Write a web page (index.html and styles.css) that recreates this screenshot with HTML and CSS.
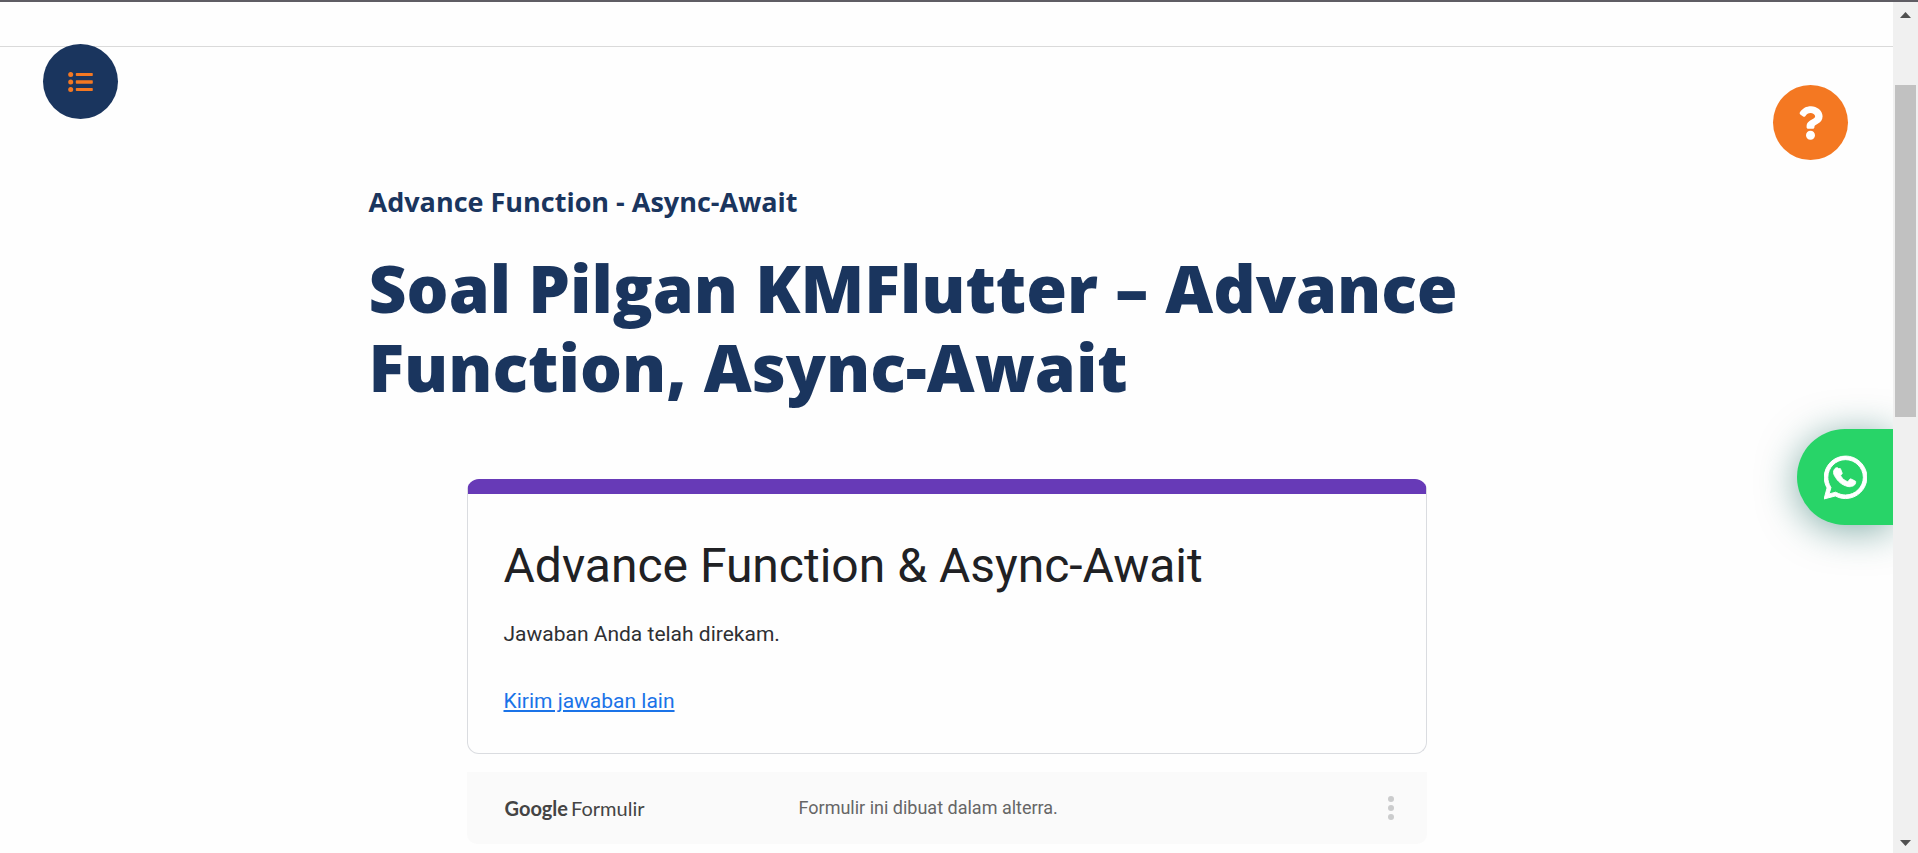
FILE: index.html
```html
<!DOCTYPE html>
<html lang="id">
<head>
<meta charset="utf-8">
<title>Soal Pilgan KMFlutter – Advance Function, Async-Await</title>
<link rel="stylesheet" href="styles.css">
</head>
<body>
<div class="viewport">
  <div class="page">
    <header class="topbar"></header>
    <main class="lesson">
      <p class="section-name">Advance Function - Async-Await</p>
      <h1 class="lesson-title">Soal Pilgan KMFlutter – Advance Function, Async-Await</h1>
      <div class="form">
        <section class="card">
          <h2 class="card-title">Advance Function &amp; Async-Await</h2>
          <p class="card-text">Jawaban Anda telah direkam.</p>
          <a class="card-link" href="#again">Kirim jawaban lain</a>
        </section>
        <footer class="form-footer">
          <a class="logo" href="#forms"><b class="logo-brand">Google</b><span class="logo-product">Formulir</span></a>
          <span class="footer-note">Formulir ini dibuat dalam alterra.</span>
          <button class="more" type="button" aria-label="Opsi lainnya">
            <svg width="6" height="24" viewBox="0 0 6 24" fill="#cbcccd"><circle cx="3" cy="3" r="3"/><circle cx="3" cy="12" r="3"/><circle cx="3" cy="21" r="3"/></svg>
          </button>
        </footer>
      </div>
    </main>
    <button class="round menu" type="button" aria-label="Daftar materi">
      <svg width="25" height="20" viewBox="0 0 25 20" fill="#f47822"><circle cx="2.7" cy="2.5" r="2.5"/><circle cx="2.7" cy="10" r="2.5"/><circle cx="2.7" cy="17.5" r="2.5"/><rect x="7.8" y="1" width="17" height="3" rx=".7"/><rect x="7.8" y="8.3" width="17" height="3.4" rx=".7"/><rect x="7.8" y="16" width="17" height="3" rx=".7"/></svg>
    </button>
    <button class="round help" type="button" aria-label="Bantuan">
      <svg width="25" height="34" viewBox="0 0 384 512" fill="#fff"><path d="M202.021 0C122.202 0 70.503 32.703 29.914 91.026c-7.363 10.58-5.093 25.086 5.178 32.874l43.138 32.709c10.373 7.865 25.132 6.026 33.253-4.148 25.049-31.381 43.63-49.449 82.757-49.449 30.764 0 68.816 19.799 68.816 49.631 0 22.552-18.617 34.134-48.993 51.164-35.423 19.86-82.299 44.576-82.299 106.405V320c0 13.255 10.745 24 24 24h72.471c13.255 0 24-10.745 24-24v-5.773c0-42.86 125.268-44.645 125.268-160.627C377.504 66.256 286.902 0 202.021 0zM192 373.459c-38.196 0-69.271 31.075-69.271 69.271 0 38.195 31.075 69.27 69.271 69.27s69.271-31.075 69.271-69.271-31.075-69.27-69.271-69.27z"/></svg>
    </button>
    <a class="whatsapp" href="#chat" aria-label="WhatsApp">
      <svg width="43" height="49" viewBox="0 0 448 512" fill="#fff"><path d="M380.9 97.1C339 55.1 283.2 32 223.9 32c-122.4 0-222 99.6-222 222 0 39.1 10.2 77.3 29.6 111L0 480l117.7-30.9c32.4 17.7 68.9 27 106.1 27h.1c122.3 0 224.1-99.6 224.1-222 0-59.3-25.2-115-67.1-157zm-157 341.6c-33.2 0-65.7-8.9-94-25.7l-6.7-4-69.8 18.3L72 359.2l-4.4-7c-18.5-29.4-28.2-63.3-28.2-98.2 0-101.7 82.8-184.5 184.6-184.5 49.3 0 95.6 19.2 130.4 54.1 34.8 34.9 56.2 81.2 56.1 130.5 0 101.8-84.9 184.6-186.6 184.6zm-73.700-275.300c-3.700-8.200-7.600-8.400-11.100-8.500-2.900-.2-6.200-.1-9.500-.1s-8.700 1.300-13.200 6.200c-4.500 5-17.300 16.900-17.300 41.200 0 24.400 17.700 47.900 20.200 51.200 10 14 36.600 64.200 104 88.500 46.400 16.700 56 7.500 66 6.700 10.100-.9 32.500-13.300 37.100-26.200 4.600-12.800 4.600-23.900 3.200-26.200-1.400-2.200-5-3.600-10.500-6.400-5.500-2.700-32.500-16.100-37.600-17.900-5-1.900-8.700-2.800-12.400 2.700-3.700 5.600-14.200 17.900-17.500 21.600-3.200 3.700-6.400 4.100-11.900 1.400-27.900-14-46.200-25-64.700-56.600-4.900-8.400 4.900-7.800 14-26 1.600-3.300.8-6-.6-8.300-1.400-2.300-12.100-29.300-17.600-43z" stroke="#fff" stroke-width="10"/></svg>
    </a>
  </div>
  <div class="scrollbar" aria-hidden="true">
    <svg width="11" height="6" viewBox="0 0 11 6" fill="#505050"><path d="M5.500 0 11 6H0z"/></svg>
    <div class="track"><div class="thumb"></div></div>
    <svg width="11" height="6" viewBox="0 0 11 6" fill="#505050"><path d="M0 0h11L5.500 6z"/></svg>
  </div>
</div>
</body>
</html>
```
FILE: styles.css
```css
* { box-sizing: border-box; }

body {
  margin: 0;
  background: #fefefe;
  font-family: Roboto, "Liberation Sans", sans-serif;
}

p, h1, h2 { margin: 0; }

button {
  padding: 0;
  border: 0;
  cursor: pointer;
}

.viewport {
  display: flex;
  height: 100vh;
  border-top: 2px solid #5f5d64;
}

.page {
  position: relative;
  flex: 1;
  overflow: hidden;
}

.topbar {
  height: 45px;
  border-bottom: 1px solid #dadada;
}

.lesson {
  max-width: 1156px;
  margin: 0 auto;
  padding-top: 135px;
}

.section-name {
  color: #1a355e;
  font: 700 27px/40px "Open Sans", sans-serif;
}

.lesson-title {
  margin-top: 26px;
  color: #1a355e;
  font: 800 66px/79px "Open Sans", sans-serif;
}

.form {
  max-width: 960px;
  margin: 73px auto 0;
}

.card {
  padding: 42px 36px 37px;
  border: 1px solid #dadce0;
  border-top: 15px solid #673ab7;
  border-radius: 12px;
}

.card-title {
  color: #202124;
  font-weight: 400;
  font-size: 48px;
  line-height: 60px;
}

.card-text {
  margin: 23px 0 37px;
  color: #2f3033;
  font-size: 21px;
  line-height: 30px;
}

.card-link {
  display: inline-block;
  color: #1a73e8;
  font-size: 21px;
  line-height: 30px;
}

.form-footer {
  display: grid;
  grid-template-columns: 294px 1fr 6px;
  align-items: center;
  height: 72px;
  margin-top: 18px;
  padding: 0 33px 0 38px;
  background: #fafafa;
  border-radius: 0 0 10px 10px;
}

.logo {
  display: flex;
  gap: 3px;
  color: #444;
  font: 400 20px/30px Lato, sans-serif;
  text-decoration: none;
}

.logo-brand { font-weight: 700; }

.footer-note {
  color: #666;
  font-size: 18px;
  line-height: 24px;
}

.more {
  display: flex;
  background: none;
}

.round {
  position: absolute;
  display: flex;
  align-items: center;
  justify-content: center;
  width: 75px;
  height: 75px;
  border-radius: 50%;
}

.menu {
  top: 42px;
  left: 43px;
  background: #1a355e;
}

.help {
  top: 83px;
  right: 45px;
  background: #f47822;
}

.whatsapp {
  position: absolute;
  top: 427px;
  right: 0;
  display: flex;
  align-items: center;
  width: 96px;
  height: 96px;
  padding-left: 27px;
  background: #28d468;
  border-radius: 48px 0 0 48px;
  box-shadow: 0 5px 38px rgba(7, 94, 84, 0.5);
}

.scrollbar {
  display: flex;
  flex-direction: column;
  align-items: center;
  width: 25px;
  padding: 10px 0 7px;
  background: #f0f0f0;
}

.track {
  flex: 1;
  width: 21px;
  padding-top: 67px;
}

.thumb {
  height: 44%;
  background: #c1c1c1;
}
```
